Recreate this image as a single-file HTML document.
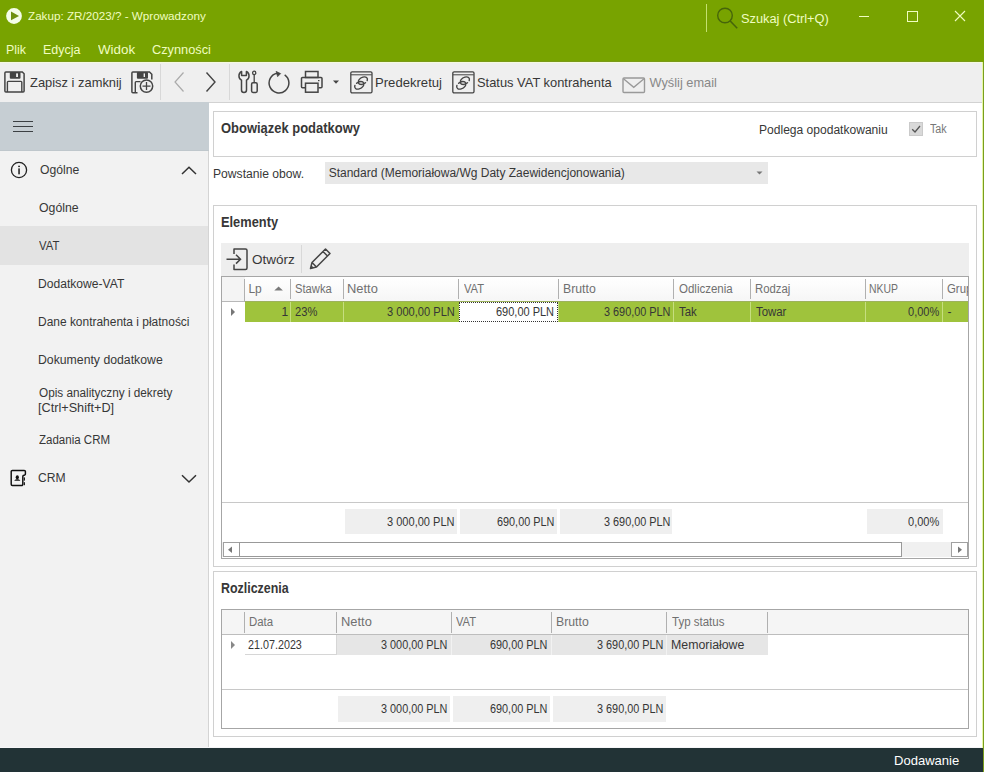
<!DOCTYPE html>
<html><head><meta charset="utf-8"><style>
html,body{margin:0;padding:0;width:984px;height:772px;overflow:hidden;background:#fff}
body{position:relative;font-family:"Liberation Sans",sans-serif}
.r{position:absolute;display:block}
.t{position:absolute;white-space:nowrap;line-height:1;transform-origin:0 0}
</style></head><body>
<div class="r" style="left:0px;top:0px;width:984px;height:772px;background:#ffffff;"></div>
<div class="r" style="left:0px;top:0px;width:984px;height:62px;background:#78a300;"></div>
<div class="r" style="left:0px;top:61px;width:982px;height:1px;background:#7a9a18;"></div>
<svg class="r" style="left:6px;top:8px;" width="17" height="17" viewBox="0 0 17 17"><circle cx="8" cy="8" r="7.9" fill="#f4fde8"/><path d="M5 3.6 L13 8 L5 12.3 Z" fill="#6e9010"/></svg>
<div class="t" style="left:28.30px;top:10px;font-size:11.6px;color:#f0fdc0;transform:scaleX(1.0068);">Zakup: ZR/2023/? - Wprowadzony</div>
<div class="r" style="left:706px;top:4px;width:1px;height:28px;background:#c4e070;"></div>
<svg class="r" style="left:714px;top:6px;" width="26" height="26" viewBox="0 0 26 26"><circle cx="11" cy="9.5" r="7.3" fill="none" stroke="#46650a" stroke-width="1.4"/><path d="M16.2 15 L23.2 22.2" stroke="#46650a" stroke-width="1.6"/></svg>
<div class="t" style="left:741.36px;top:13px;font-size:12.3px;color:#f0fdc0;transform:scaleX(1.0398);">Szukaj (Ctrl+Q)</div>
<div class="r" style="left:859px;top:16px;width:10px;height:1px;background:#f0fdc0;"></div>
<div class="r" style="left:907px;top:11px;width:9px;height:9px;border:1px solid #f0fdc0;background:transparent;"></div>
<svg class="r" style="left:954px;top:10px;" width="12" height="12" viewBox="0 0 12 12"><path d="M1 1 L11 11 M11 1 L1 11" stroke="#f0fdc0" stroke-width="1.1"/></svg>
<div class="t" style="left:6.19px;top:44px;font-size:12.3px;color:#f0fdc0;transform:scaleX(1.0105);">Plik</div>
<div class="t" style="left:42.99px;top:44px;font-size:12.3px;color:#f0fdc0;transform:scaleX(1.0139);">Edycja</div>
<div class="t" style="left:98.40px;top:44px;font-size:12.3px;color:#f0fdc0;transform:scaleX(1.0853);">Widok</div>
<div class="t" style="left:152.06px;top:44px;font-size:12.3px;color:#f0fdc0;transform:scaleX(1.0382);">Czynności</div>
<div class="r" style="left:0px;top:62px;width:982px;height:40px;background:#efefef;"></div>
<div class="r" style="left:0px;top:62px;width:982px;height:1px;background:#f4fadf;"></div>
<div class="r" style="left:209px;top:102px;width:773px;height:1px;background:#d2d2d2;"></div>
<svg class="r" style="left:4px;top:71px;" width="22" height="22" viewBox="0 0 22 22"><path d="M0.9 1.9 Q0.9 0.9 1.9 0.9 H18.3 L20.1 2.7 V20.1 Q20.1 21.1 19.1 21.1 H1.9 Q0.9 21.1 0.9 20.1 Z" fill="none" stroke="#444" stroke-width="1.5"/><rect x="5.8" y="0.9" width="10.7" height="6.8" rx="1" fill="#444"/><rect x="12.1" y="2.4" width="1.9" height="3.6" fill="#efefef"/><path d="M3.4 21 V11.2 A0.8 0.8 0 0 1 4.2 10.4 H17 A0.8 0.8 0 0 1 17.8 11.2 V21" fill="none" stroke="#444" stroke-width="1.4"/></svg>
<div class="t" style="left:30.00px;top:77px;font-size:12.8px;color:#373737;transform:scaleX(1.0078);">Zapisz i zamknij</div>
<svg class="r" style="left:131px;top:71px;" width="23" height="23" viewBox="0 0 23 23"><path d="M6.5 21.7 H1.9 Q0.9 21.7 0.9 20.7 V1.9 Q0.9 0.9 1.9 0.9 H18.5 L20.8 3.2 V8.4" fill="none" stroke="#444" stroke-width="1.5"/><rect x="5.9" y="0.9" width="11.1" height="6.8" rx="1" fill="#444"/><rect x="12.6" y="2.4" width="1.4" height="3.6" fill="#efefef"/><path d="M4.3 21.2 V11.4 A0.8 0.8 0 0 1 5.1 10.6 H9.5" fill="none" stroke="#444" stroke-width="1.4"/><circle cx="15.5" cy="15.1" r="6.2" fill="#efefef" stroke="#444" stroke-width="1.5"/><path d="M15.5 11.1 V19.1 M11.5 15.1 H19.5" stroke="#444" stroke-width="1.3"/></svg>
<div class="r" style="left:160px;top:64px;width:1px;height:36px;background:#d8d8d8;"></div>
<svg class="r" style="left:172px;top:71px;" width="14" height="22" viewBox="0 0 14 22"><path d="M11.5 1.5 L3 11 L11.5 20.5" fill="none" stroke="#aaa" stroke-width="1.2"/></svg>
<svg class="r" style="left:204px;top:71px;" width="14" height="22" viewBox="0 0 14 22"><path d="M2.5 1.5 L11 11 L2.5 20.5" fill="none" stroke="#444" stroke-width="1.4"/></svg>
<div class="r" style="left:229px;top:64px;width:1px;height:36px;background:#d8d8d8;"></div>
<svg class="r" style="left:237px;top:70px;" width="23" height="24" viewBox="0 0 23 24"><path d="M4.6 1.5 C1.2 3 1 8.5 4.5 10.2 V20 A2.5 2.5 0 0 0 9.5 20 V10.2 C13 8.5 12.8 3 9.4 1.5 V5.5 H4.6 Z" fill="none" stroke="#444" stroke-width="1.5" stroke-linejoin="round"/><ellipse cx="17.2" cy="2.9" rx="1.6" ry="1.8" fill="none" stroke="#444" stroke-width="1.3"/><path d="M17.2 4.6 V12.5" stroke="#444" stroke-width="1.3"/><rect x="14.6" y="12.8" width="5.6" height="9.6" rx="1.4" fill="none" stroke="#444" stroke-width="1.5"/></svg>
<svg class="r" style="left:268px;top:70px;" width="23" height="24" viewBox="0 0 23 24"><path d="M16.68 4.89 A9.9 9.9 0 1 1 9.28 3.25" fill="none" stroke="#444" stroke-width="1.5"/><path d="M8 1.3 L12.7 3.6 L9.6 6.7 Z" fill="#444" stroke="#444" stroke-width="0.6" stroke-linejoin="round"/></svg>
<svg class="r" style="left:300px;top:70px;" width="25" height="24" viewBox="0 0 25 24"><rect x="5.5" y="1.5" width="12.5" height="6" fill="none" stroke="#444" stroke-width="1.5"/><path d="M5 17.8 H2.5 A1 1 0 0 1 1.5 16.8 V8.5 A1 1 0 0 1 2.5 7.5 H21 A1 1 0 0 1 22 8.5 V16.8 A1 1 0 0 1 21 17.8 H18.5" fill="none" stroke="#444" stroke-width="1.5"/><rect x="5.5" y="13.2" width="12.5" height="9" fill="#efefef" stroke="#444" stroke-width="1.5"/><rect x="18" y="10" width="1.5" height="1.2" fill="#444"/></svg>
<svg class="r" style="left:333px;top:80px;" width="7" height="5" viewBox="0 0 7 5"><path d="M0 0.5 H6 L3 3.8 Z" fill="#444"/></svg>
<svg class="r" style="left:350px;top:71px;" width="23" height="23" viewBox="0 0 23 23"><rect x="0.8" y="0.8" width="21.2" height="21" rx="1.3" fill="none" stroke="#444" stroke-width="1.3"/><path d="M1 3.8 H21.8" stroke="#444" stroke-width="1"/><path d="M15.51 11.81 A5.00 3.30 -30 1 1 17.18 9.62 M6.59 12.19 A5.00 3.30 -30 1 1 4.92 14.38" fill="none" stroke="#444" stroke-width="1.4" stroke-linecap="round"/></svg>
<div class="t" style="left:375.48px;top:77px;font-size:12.8px;color:#373737;transform:scaleX(1.0234);">Predekretuj</div>
<svg class="r" style="left:452px;top:71px;" width="23" height="23" viewBox="0 0 23 23"><rect x="0.8" y="0.8" width="21.2" height="21" rx="1.3" fill="none" stroke="#444" stroke-width="1.3"/><path d="M1 3.8 H21.8" stroke="#444" stroke-width="1"/><path d="M15.51 11.81 A5.00 3.30 -30 1 1 17.18 9.62 M6.59 12.19 A5.00 3.30 -30 1 1 4.92 14.38" fill="none" stroke="#444" stroke-width="1.4" stroke-linecap="round"/></svg>
<div class="t" style="left:477.49px;top:77px;font-size:12.8px;color:#373737;transform:scaleX(1.0068);">Status VAT kontrahenta</div>
<svg class="r" style="left:622px;top:77px;" width="24" height="17" viewBox="0 0 24 17"><rect x="1" y="1" width="21.5" height="14.5" rx="1" fill="none" stroke="#999" stroke-width="1.4"/><path d="M1.5 1.8 L11.75 10.3 L22 1.8" fill="none" stroke="#999" stroke-width="1.3"/></svg>
<div class="t" style="left:649.50px;top:77px;font-size:12.8px;color:#888;">Wyślij email</div>
<div class="r" style="left:982px;top:62px;width:1px;height:710px;background:#e6f7a6;"></div>
<div class="r" style="left:983px;top:62px;width:1px;height:710px;background:#7a9e1e;"></div>
<div class="r" style="left:0px;top:102px;width:208px;height:646px;background:#f2f2f2;"></div>
<div class="r" style="left:208px;top:151px;width:1px;height:597px;background:#d4d4d4;"></div>
<div class="r" style="left:0px;top:102px;width:209px;height:49px;background:#c6ced3;"></div>
<div class="r" style="left:0px;top:150px;width:209px;height:1px;background:#bfc7cc;"></div>
<div class="r" style="left:13px;top:121px;width:20px;height:1.2999999999999972px;background:#3c4043;"></div>
<div class="r" style="left:13px;top:126px;width:20px;height:1.2999999999999972px;background:#3c4043;"></div>
<div class="r" style="left:13px;top:131px;width:20px;height:1.3000000000000114px;background:#3c4043;"></div>
<svg class="r" style="left:10px;top:161px;" width="18" height="18" viewBox="0 0 18 18"><circle cx="9" cy="9" r="7.6" fill="none" stroke="#222" stroke-width="1.3"/><rect x="8.2" y="7.4" width="1.7" height="5.9" fill="#333"/><rect x="8.2" y="4.7" width="1.7" height="1.4" fill="#222"/></svg>
<div class="t" style="left:39.80px;top:164px;font-size:12px;color:#373737;transform:scaleX(1.0132);">Ogólne</div>
<svg class="r" style="left:180px;top:165px;" width="18" height="11" viewBox="0 0 18 11"><path d="M2 9 L9 2.2 L16 9" fill="none" stroke="#333" stroke-width="1.5"/></svg>
<div class="r" style="left:0px;top:226px;width:208px;height:39px;background:#e3e3e3;"></div>
<div class="t" style="left:39.20px;top:202px;font-size:12px;color:#373737;transform:scaleX(1.0237);">Ogólne</div>
<div class="t" style="left:39.40px;top:240px;font-size:12px;color:#373737;transform:scaleX(0.9409);">VAT</div>
<div class="t" style="left:38.39px;top:278px;font-size:12px;color:#373737;transform:scaleX(1.0082);">Dodatkowe-VAT</div>
<div class="t" style="left:38.40px;top:316px;font-size:12px;color:#373737;transform:scaleX(0.9960);">Dane kontrahenta i płatności</div>
<div class="t" style="left:38.38px;top:354px;font-size:12px;color:#373737;transform:scaleX(1.0215);">Dokumenty dodatkowe</div>
<div class="t" style="left:39.40px;top:387px;font-size:12px;color:#373737;transform:scaleX(0.9801);">Opis analityczny i dekrety</div>
<div class="t" style="left:38.34px;top:402px;font-size:12px;color:#373737;transform:scaleX(1.0571);">[Ctrl+Shift+D]</div>
<div class="t" style="left:39.40px;top:434px;font-size:12px;color:#373737;transform:scaleX(0.9603);">Zadania CRM</div>
<svg class="r" style="left:10px;top:469px;" width="18" height="18" viewBox="0 0 18 18"><path d="M2.4 1.4 H14.2 A1.2 1.2 0 0 1 15.4 2.6 V5 A1.2 1.2 0 0 1 14.2 6.2 H14 A1.2 1.2 0 0 0 12.8 7.4 V15.3 A1.2 1.2 0 0 1 11.6 16.5 H2.4 A1.2 1.2 0 0 1 1.2 15.3 V2.6 A1.2 1.2 0 0 1 2.4 1.4 Z" fill="none" stroke="#111" stroke-width="1.45"/><rect x="13.7" y="8.4" width="1.3" height="3.2" fill="#222"/><rect x="13.7" y="13.2" width="1.3" height="3" fill="#222"/><ellipse cx="7.3" cy="8.2" rx="1.6" ry="2" fill="#111"/><path d="M4.2 11.8 C5 10.4 6.2 10.2 7.3 10.2 C8.4 10.2 9.6 10.4 10.4 11.8 Z" fill="#111"/></svg>
<div class="t" style="left:38.39px;top:472px;font-size:12px;color:#373737;transform:scaleX(1.0120);">CRM</div>
<svg class="r" style="left:180px;top:473px;" width="18" height="11" viewBox="0 0 18 11"><path d="M2 2.2 L9 9 L16 2.2" fill="none" stroke="#333" stroke-width="1.5"/></svg>
<div class="r" style="left:213px;top:111px;width:762px;height:44px;border:1px solid #d0d0d0;background:transparent;"></div>
<div class="t" style="left:220.66px;top:122px;font-size:13.8px;color:#373737;font-weight:bold;transform:scaleX(0.9388);">Obowiązek podatkowy</div>
<div class="t" style="left:758.80px;top:124px;font-size:12px;color:#373737;transform:scaleX(1.0047);">Podlega opodatkowaniu</div>
<div class="r" style="left:909px;top:122px;width:12px;height:12px;border:1px solid #cacaca;background:#d9d9d9;"></div>
<svg class="r" style="left:909px;top:122px;" width="14" height="14" viewBox="0 0 14 14"><path d="M3.2 7.2 L6 10 L11 4" fill="none" stroke="#555" stroke-width="1.3"/></svg>
<div class="t" style="left:930.00px;top:123px;font-size:12px;color:#777;transform:scaleX(0.8947);">Tak</div>
<div class="t" style="left:212.99px;top:168px;font-size:12px;color:#373737;transform:scaleX(1.0114);">Powstanie obow.</div>
<div class="r" style="left:325px;top:162px;width:443px;height:22px;background:#e8e8e8;"></div>
<div class="t" style="left:328.70px;top:167px;font-size:12px;color:#373737;">Standard (Memoriałowa/Wg Daty Zaewidencjonowania)</div>
<svg class="r" style="left:756px;top:171px;" width="8" height="4" viewBox="0 0 8 4"><path d="M0.5 0.5 H6.5 L3.5 3.5 Z" fill="#777"/></svg>
<div class="r" style="left:213px;top:205px;width:762px;height:360px;border:1px solid #d0d0d0;background:transparent;"></div>
<div class="t" style="left:220.87px;top:216px;font-size:13.8px;color:#373737;font-weight:bold;transform:scaleX(0.9300);">Elementy</div>
<div class="r" style="left:221px;top:243px;width:748px;height:33px;background:#eeeeee;"></div>
<svg class="r" style="left:225px;top:247px;" width="24" height="24" viewBox="0 0 24 24"><path d="M9 7 V2 H20.5 A1.5 1.5 0 0 1 22 3.5 V21 A1.5 1.5 0 0 1 20.5 22.5 H9 V17.5" fill="none" stroke="#444" stroke-width="1.5" stroke-linejoin="round"/><path d="M1.5 12.2 H15.5 M11 7.8 L15.5 12.2 L11 16.6" fill="none" stroke="#444" stroke-width="1.5"/></svg>
<div class="t" style="left:251.65px;top:254px;font-size:12.9px;color:#373737;transform:scaleX(1.0487);">Otwórz</div>
<div class="r" style="left:301px;top:245px;width:1px;height:28px;background:#d8d8d8;"></div>
<svg class="r" style="left:308px;top:247px;" width="25" height="25" viewBox="0 0 25 25"><path d="M2.5 21.5 L4 15.5 L17.5 2 L22 6.5 L8.5 20 Z M15 4.5 L19.5 9 M4 15.5 L8.5 20" fill="none" stroke="#444" stroke-width="1.5" stroke-linejoin="round"/><path d="M2.5 21.5 L3.3 18.2 L5.8 20.7 Z" fill="#444"/></svg>
<div class="r" style="left:221px;top:276px;width:746px;height:281px;border:1px solid #a6a6a6;background:transparent;"></div>
<div class="r" style="left:222px;top:277px;width:23px;height:24px;background:#f4f4f4;"></div>
<div class="r" style="left:245px;top:277px;width:723px;height:24px;background:linear-gradient(#ffffff,#f6f6f6);"></div>
<div class="r" style="left:222px;top:301px;width:23px;height:1px;background:#b8b8b8;"></div>
<div class="r" style="left:245px;top:301px;width:723px;height:1px;background:#9db25c;"></div>
<div class="r" style="left:244px;top:279px;width:1px;height:20px;background:#b0b0b0;"></div>
<div class="r" style="left:290px;top:279px;width:1px;height:20px;background:#b0b0b0;"></div>
<div class="r" style="left:343px;top:279px;width:1px;height:20px;background:#b0b0b0;"></div>
<div class="r" style="left:458px;top:279px;width:1px;height:20px;background:#b0b0b0;"></div>
<div class="r" style="left:558px;top:279px;width:1px;height:20px;background:#b0b0b0;"></div>
<div class="r" style="left:673px;top:279px;width:1px;height:20px;background:#b0b0b0;"></div>
<div class="r" style="left:750px;top:279px;width:1px;height:20px;background:#b0b0b0;"></div>
<div class="r" style="left:865px;top:279px;width:1px;height:20px;background:#b0b0b0;"></div>
<div class="r" style="left:942px;top:279px;width:1px;height:20px;background:#b0b0b0;"></div>
<div class="r" style="left:244px;top:299px;width:1px;height:3px;background:#b0b0b0;"></div>
<div class="t" style="left:248.40px;top:283px;font-size:12px;color:#707070;">Lp</div>
<svg class="r" style="left:274px;top:286px;" width="10" height="5" viewBox="0 0 10 5"><path d="M0.3 4.5 L4.6 0.4 L8.9 4.5 Z" fill="#7a7a7a"/></svg>
<div class="t" style="left:294.57px;top:283px;font-size:12px;color:#707070;transform:scaleX(0.9342);">Stawka</div>
<div class="t" style="left:347.43px;top:283px;font-size:12px;color:#707070;transform:scaleX(1.0741);">Netto</div>
<div class="t" style="left:463.60px;top:283px;font-size:12px;color:#707070;transform:scaleX(0.9273);">VAT</div>
<div class="t" style="left:562.98px;top:283px;font-size:12px;color:#707070;transform:scaleX(1.0226);">Brutto</div>
<div class="t" style="left:678.90px;top:283px;font-size:12px;color:#707070;transform:scaleX(0.9589);">Odliczenia</div>
<div class="t" style="left:754.66px;top:283px;font-size:12px;color:#707070;transform:scaleX(0.9444);">Rodzaj</div>
<div class="t" style="left:869.33px;top:283px;font-size:12px;color:#707070;transform:scaleX(0.8688);">NKUP</div>
<div class="r" style="left:945px;top:279px;width:23px;height:20px;overflow:hidden"><div class="t" style="left:1.55px;top:4px;font-size:12px;color:#707070;transform:scaleX(0.9500);">Grupa</div></div>
<div class="r" style="left:245px;top:302px;width:723px;height:20px;background:#9fc33c;"></div>
<div class="r" style="left:290px;top:302px;width:1px;height:20px;background:#c6de80;"></div>
<div class="r" style="left:343px;top:302px;width:1px;height:20px;background:#c6de80;"></div>
<div class="r" style="left:558px;top:302px;width:1px;height:20px;background:#c6de80;"></div>
<div class="r" style="left:673px;top:302px;width:1px;height:20px;background:#c6de80;"></div>
<div class="r" style="left:750px;top:302px;width:1px;height:20px;background:#c6de80;"></div>
<div class="r" style="left:865px;top:302px;width:1px;height:20px;background:#c6de80;"></div>
<div class="r" style="left:942px;top:302px;width:1px;height:20px;background:#c6de80;"></div>
<svg class="r" style="left:229px;top:306px;" width="8" height="12" viewBox="0 0 8 12"><path d="M2 2 L6 6 L2 10 Z" fill="#777"/></svg>
<div class="r" style="left:459px;top:302px;width:99px;height:20px;background:#ffffff;border:1px dotted #333;box-sizing:border-box"></div>
<div class="t" style="left:281.50px;top:306px;font-size:12px;color:#363636;">1</div>
<div class="t" style="left:294.57px;top:306px;font-size:12px;color:#363636;transform:scaleX(0.9300);">23%</div>
<div class="t" style="left:387.38px;top:306px;font-size:12px;color:#363636;transform:scaleX(0.9250);">3 000,00 PLN</div>
<div class="t" style="left:496.28px;top:306px;font-size:12px;color:#363636;transform:scaleX(0.9161);">690,00 PLN</div>
<div class="t" style="left:603.93px;top:306px;font-size:12px;color:#363636;transform:scaleX(0.9050);">3 690,00 PLN</div>
<div class="t" style="left:679.00px;top:306px;font-size:12px;color:#363636;transform:scaleX(0.9500);">Tak</div>
<div class="t" style="left:755.60px;top:306px;font-size:12px;color:#363636;transform:scaleX(0.9500);">Towar</div>
<div class="t" style="left:907.92px;top:306px;font-size:12px;color:#363636;transform:scaleX(0.9200);">0,00%</div>
<div class="t" style="left:947.50px;top:306px;font-size:12px;color:#363636;">-</div>
<div class="r" style="left:222px;top:502px;width:746px;height:1px;background:#c8c8c8;"></div>
<div class="r" style="left:345px;top:509px;width:112px;height:25px;background:#efefef;"></div>
<div class="r" style="left:460px;top:509px;width:97px;height:25px;background:#efefef;"></div>
<div class="r" style="left:560px;top:509px;width:112px;height:25px;background:#efefef;"></div>
<div class="r" style="left:867px;top:509px;width:76px;height:25px;background:#efefef;"></div>
<div class="t" style="left:387.18px;top:516px;font-size:12px;color:#363636;transform:scaleX(0.9208);">3 000,00 PLN</div>
<div class="t" style="left:496.99px;top:516px;font-size:12px;color:#363636;transform:scaleX(0.9050);">690,00 PLN</div>
<div class="t" style="left:603.93px;top:516px;font-size:12px;color:#363636;transform:scaleX(0.9050);">3 690,00 PLN</div>
<div class="t" style="left:907.92px;top:516px;font-size:12px;color:#363636;transform:scaleX(0.9200);">0,00%</div>
<div class="r" style="left:222px;top:542px;width:746px;height:15px;background:#f0f0f0;"></div>
<div class="r" style="left:223px;top:542px;width:15px;height:13px;border:1px solid #a0a0a0;background:#ffffff;"></div>
<svg class="r" style="left:227px;top:546px;" width="6" height="8" viewBox="0 0 6 8"><path d="M5 0.5 V7 L1 3.75 Z" fill="#777"/></svg>
<div class="r" style="left:239px;top:542px;width:661px;height:13px;border:1px solid #999999;background:#ffffff;"></div>
<div class="r" style="left:951px;top:542px;width:15px;height:13px;border:1px solid #a0a0a0;background:#ffffff;"></div>
<svg class="r" style="left:957px;top:546px;" width="6" height="8" viewBox="0 0 6 8"><path d="M1 0.5 V7 L5 3.75 Z" fill="#777"/></svg>
<div class="r" style="left:213px;top:571px;width:762px;height:164px;border:1px solid #d0d0d0;background:transparent;"></div>
<div class="t" style="left:221.00px;top:582px;font-size:13.8px;color:#373737;font-weight:bold;transform:scaleX(0.9000);">Rozliczenia</div>
<div class="r" style="left:221px;top:609px;width:746px;height:118px;border:1px solid #a6a6a6;background:transparent;"></div>
<div class="r" style="left:222px;top:610px;width:746px;height:24px;background:#f5f5f5;"></div>
<div class="r" style="left:222px;top:634px;width:746px;height:1px;background:#bdbdbd;"></div>
<div class="r" style="left:244px;top:612px;width:1px;height:21px;background:#b0b0b0;"></div>
<div class="r" style="left:336px;top:612px;width:1px;height:21px;background:#b0b0b0;"></div>
<div class="r" style="left:451px;top:612px;width:1px;height:21px;background:#b0b0b0;"></div>
<div class="r" style="left:551px;top:612px;width:1px;height:21px;background:#b0b0b0;"></div>
<div class="r" style="left:666px;top:612px;width:1px;height:21px;background:#b0b0b0;"></div>
<div class="r" style="left:767px;top:612px;width:1px;height:21px;background:#b0b0b0;"></div>
<div class="t" style="left:248.65px;top:616px;font-size:12px;color:#707070;transform:scaleX(0.9500);">Data</div>
<div class="t" style="left:340.63px;top:616px;font-size:12px;color:#707070;transform:scaleX(1.0741);">Netto</div>
<div class="t" style="left:456.20px;top:616px;font-size:12px;color:#707070;transform:scaleX(0.9273);">VAT</div>
<div class="t" style="left:555.68px;top:616px;font-size:12px;color:#707070;transform:scaleX(1.0226);">Brutto</div>
<div class="t" style="left:672.00px;top:616px;font-size:12px;color:#707070;transform:scaleX(0.9593);">Typ status</div>
<svg class="r" style="left:229px;top:639px;" width="8" height="12" viewBox="0 0 8 12"><path d="M2 2 L6 6 L2 10 Z" fill="#888"/></svg>
<div class="r" style="left:245px;top:635px;width:91px;height:19px;border:1px solid #d6d6d6;background:#ffffff;border-top:none;border-left:none"></div>
<div class="r" style="left:337px;top:635px;width:431px;height:20px;background:#e6e6e6;"></div>
<div class="r" style="left:451px;top:635px;width:1px;height:20px;background:#f2f2f2;"></div>
<div class="r" style="left:551px;top:635px;width:1px;height:20px;background:#f2f2f2;"></div>
<div class="r" style="left:666px;top:635px;width:1px;height:20px;background:#f2f2f2;"></div>
<div class="t" style="left:248.40px;top:639px;font-size:12px;color:#363636;transform:scaleX(0.8966);">21.07.2023</div>
<div class="t" style="left:381.24px;top:639px;font-size:12px;color:#363636;transform:scaleX(0.9050);">3 000,00 PLN</div>
<div class="t" style="left:490.38px;top:639px;font-size:12px;color:#363636;transform:scaleX(0.9050);">690,00 PLN</div>
<div class="t" style="left:596.84px;top:639px;font-size:12px;color:#363636;transform:scaleX(0.9050);">3 690,00 PLN</div>
<div class="t" style="left:670.97px;top:639px;font-size:12px;color:#363636;transform:scaleX(1.0286);">Memoriałowe</div>
<div class="r" style="left:222px;top:689px;width:746px;height:1px;background:#c8c8c8;"></div>
<div class="r" style="left:338px;top:696px;width:112px;height:26px;background:#efefef;"></div>
<div class="r" style="left:453px;top:696px;width:97px;height:26px;background:#efefef;"></div>
<div class="r" style="left:553px;top:696px;width:113px;height:26px;background:#efefef;"></div>
<div class="t" style="left:381.44px;top:703px;font-size:12px;color:#363636;transform:scaleX(0.9050);">3 000,00 PLN</div>
<div class="t" style="left:490.38px;top:703px;font-size:12px;color:#363636;transform:scaleX(0.9050);">690,00 PLN</div>
<div class="t" style="left:596.84px;top:703px;font-size:12px;color:#363636;transform:scaleX(0.9050);">3 690,00 PLN</div>
<div class="r" style="left:0px;top:747px;width:982px;height:1px;background:#f6f6f8;"></div>
<div class="r" style="left:0px;top:748px;width:983px;height:24px;background:#223336;"></div>
<div class="t" style="left:894.28px;top:755px;font-size:12.8px;color:#ffffff;transform:scaleX(1.0190);">Dodawanie</div>
</body></html>
